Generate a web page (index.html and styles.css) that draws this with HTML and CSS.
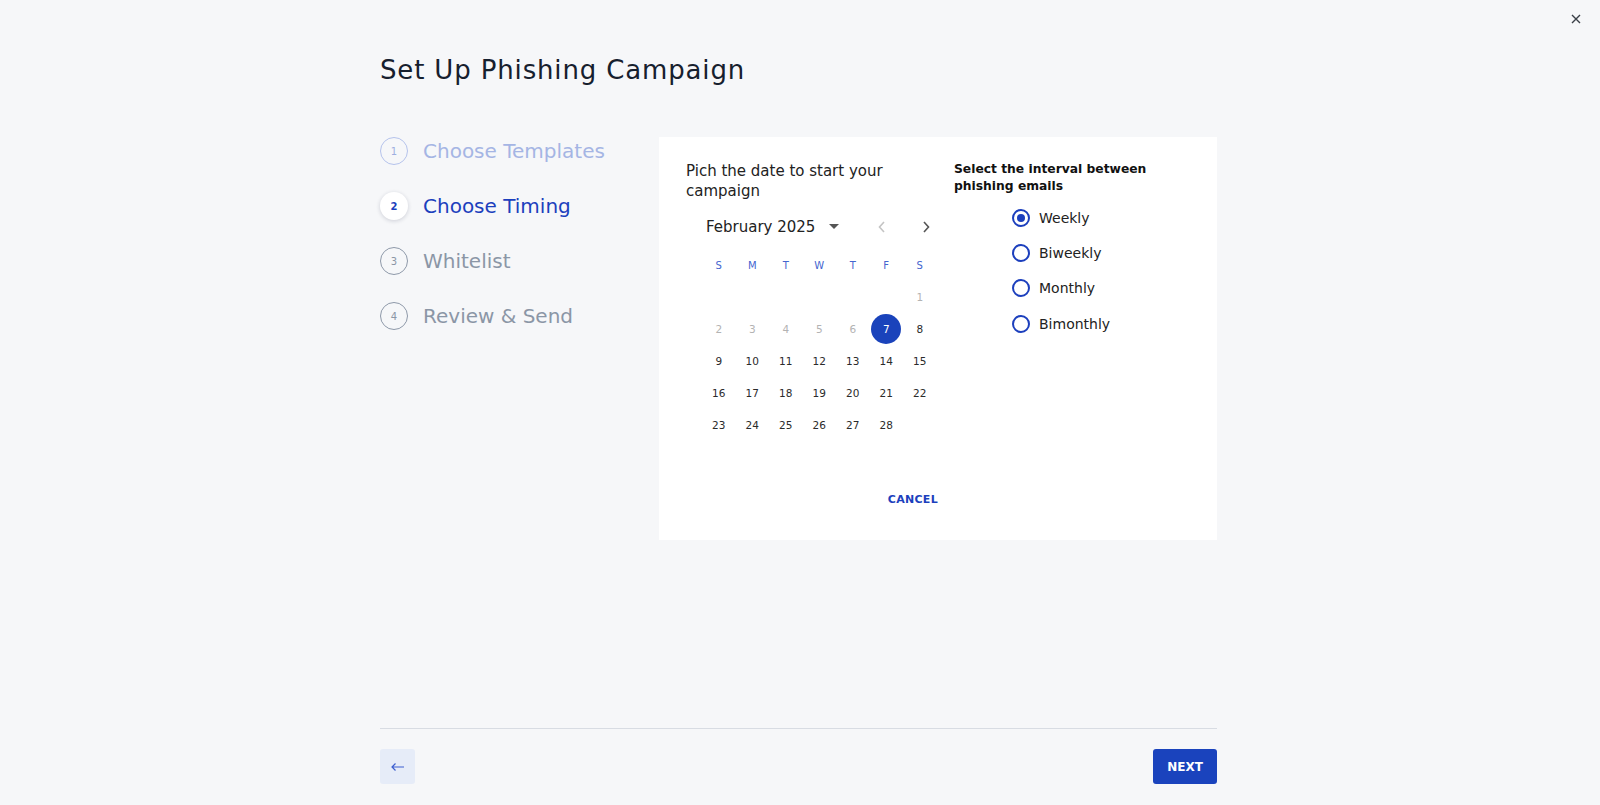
FILE: index.html
```html
<!DOCTYPE html>
<html>
<head>
<meta charset="utf-8">
<link rel="stylesheet" href="styles.css">
</head>
<body>
<button class="close" aria-label="Close">
  <svg width="10" height="10" viewBox="0 0 10 10"><path d="M1 1L9 9M9 1L1 9" stroke="#3a3f47" stroke-width="1.4" fill="none"/></svg>
</button>
<div class="page">
  <h1 class="title">Set Up Phishing Campaign</h1>
  <div class="main">
    <ul class="steps">
      <li class="step done"><span class="num">1</span><span class="label">Choose Templates</span></li>
      <li class="step active"><span class="num">2</span><span class="label">Choose Timing</span></li>
      <li class="step"><span class="num">3</span><span class="label">Whitelist</span></li>
      <li class="step"><span class="num">4</span><span class="label">Review &amp; Send</span></li>
    </ul>
    <div class="card">
      <div class="cal-col">
        <p class="prompt">Pich the date to start your campaign</p>
        <div class="cal-head">
          <span class="month">February 2025</span>
          <svg class="caret" width="10" height="6" viewBox="0 0 10 6"><path d="M0 0H10L5 5Z" fill="#555"/></svg>
          <span class="navs">
            <svg class="nav" width="16" height="16" viewBox="0 0 16 16"><path d="M10 3L5.5 8L10 13" stroke="#c4c4c4" stroke-width="1.6" fill="none"/></svg>
            <svg class="nav" width="16" height="16" viewBox="0 0 16 16"><path d="M6 3L10.5 8L6 13" stroke="#555" stroke-width="1.6" fill="none"/></svg>
          </span>
        </div>
        <div class="grid wk">
          <span>S</span><span>M</span><span>T</span><span>W</span><span>T</span><span>F</span><span>S</span>
        </div>
        <div class="grid days">
          <span></span><span></span><span></span><span></span><span></span><span></span><span class="off">1</span>
          <span class="off">2</span><span class="off">3</span><span class="off">4</span><span class="off">5</span><span class="off">6</span><span class="sel">7</span><span>8</span>
          <span>9</span><span>10</span><span>11</span><span>12</span><span>13</span><span>14</span><span>15</span>
          <span>16</span><span>17</span><span>18</span><span>19</span><span>20</span><span>21</span><span>22</span>
          <span>23</span><span>24</span><span>25</span><span>26</span><span>27</span><span>28</span><span></span>
        </div>
        <div class="actions"><button class="cancel">CANCEL</button></div>
      </div>
      <div class="int-col">
        <p class="int-title">Select the interval between phishing emails</p>
        <div class="radios">
          <label class="radio checked"><span class="dot"></span>Weekly</label>
          <label class="radio"><span class="dot"></span>Biweekly</label>
          <label class="radio"><span class="dot"></span>Monthly</label>
          <label class="radio"><span class="dot"></span>Bimonthly</label>
        </div>
      </div>
    </div>
  </div>
  <div class="footer">
    <button class="back" aria-label="Back">
      <svg width="14" height="10" viewBox="0 0 14 10"><path d="M4.5 1.5L1 5L4.5 8.5M1 5H13" stroke="#3d5fd0" stroke-width="1.2" fill="none"/></svg>
    </button>
    <button class="next">NEXT</button>
  </div>
</div>
</body>
</html>
```

FILE: styles.css
```css
* { box-sizing: border-box; }
html, body { margin: 0; padding: 0; }
body {
  background: #f6f7f9;
  font-family: "DejaVu Sans", "Noto Sans", sans-serif;
  color: #222;
  height: 805px;
  position: relative;
  overflow: hidden;
}
button { font-family: inherit; border: 0; cursor: pointer; }
.close {
  position: absolute;
  top: 12px;
  right: 17px;
  width: 14px;
  height: 14px;
  padding: 2px;
  background: transparent;
  display: flex;
  align-items: center;
  justify-content: center;
}
.page {
  width: 837px;
  margin: 0 0 0 380px;
  height: 805px;
  display: flex;
  flex-direction: column;
}
.title {
  margin: 52px 0 0 0;
  font-size: 26px;
  font-weight: 400;
  line-height: 36px;
  color: #16202e;
  letter-spacing: 0.85px;
}
.main {
  display: flex;
  margin-top: 49px;
}
.steps {
  list-style: none;
  margin: 0;
  padding: 0;
  width: 279px;
  display: flex;
  flex-direction: column;
  gap: 27px;
}
.step {
  display: flex;
  align-items: center;
  height: 28px;
  color: #8b96a6;
}
.num {
  width: 28px;
  height: 28px;
  border-radius: 50%;
  border: 1.5px solid #8e99a9;
  display: flex;
  align-items: center;
  justify-content: center;
  font-size: 10px;
  margin-right: 15px;
}
.label { font-size: 20px; }
.step.done { color: #a5b5e4; }
.step.done .num { border-color: #b5c3ec; color: #9eaee0; }
.step.active { color: #1c3fbd; }
.step.active .num {
  border: 0;
  background: #fff;
  color: #1c3fbd;
  font-weight: 700;
  box-shadow: 0 1px 4px rgba(20, 30, 60, 0.18);
}
.card {
  width: 558px;
  height: 403px;
  background: #fff;
  display: flex;
  padding: 24px 0 0 27px;
}
.cal-col {
  width: 254px;
  display: flex;
  flex-direction: column;
}
.prompt {
  margin: 0;
  font-size: 15px;
  line-height: 20px;
  color: #222;
  width: 220px;
}
.cal-head {
  display: flex;
  align-items: center;
  height: 32px;
  margin-top: 10px;
  padding-left: 20px;
}
.month { font-size: 15px; color: #222; }
.caret { margin-left: 14px; }
.navs {
  margin-left: auto;
  display: flex;
  gap: 28px;
  margin-right: 6px;
}
.grid {
  display: grid;
  grid-template-columns: repeat(7, 33.5px);
  margin-left: 16px;
}
.grid span {
  height: 32px;
  display: flex;
  align-items: center;
  justify-content: center;
}
.wk { margin-top: 6px; }
.wk span { font-size: 10px; color: #4465cf; }
.days span { font-size: 10.5px; color: #2b2b2b; }
.days span.off { color: #b3b3b3; }
.days span.sel {
  color: #fff;
  background: #1a43bb;
  border-radius: 50%;
  width: 30px;
  height: 30px;
  margin: 1px auto;
}
.actions {
  display: flex;
  justify-content: flex-end;
  margin-top: 42px;
}
.cancel {
  background: transparent;
  color: #1c3fbd;
  font-size: 11px;
  font-weight: 700;
  letter-spacing: 0.3px;
  padding: 10px 2px 10px 4px;
}
.int-col {
  padding-left: 14px;
  padding-top: 0;
}
.int-title {
  margin: 0;
  font-size: 12.3px;
  line-height: 17px;
  font-weight: 700;
  color: #111;
  width: 210px;
}
.radios {
  display: flex;
  flex-direction: column;
  margin-top: 5px;
  padding-left: 58px;
}
.radio {
  display: flex;
  align-items: center;
  height: 35.3px;
  font-size: 14px;
  color: #222;
}
.dot {
  width: 18px;
  height: 18px;
  border-radius: 50%;
  border: 2px solid #1c3fbd;
  margin-right: 9px;
  display: flex;
  align-items: center;
  justify-content: center;
}
.radio.checked .dot::after {
  content: "";
  width: 8px;
  height: 8px;
  border-radius: 50%;
  background: #1c3fbd;
}
.footer {
  margin-top: auto;
  margin-bottom: 21px;
  border-top: 1px solid #d8dce3;
  padding-top: 20px;
  display: flex;
  justify-content: space-between;
}
.back {
  width: 35px;
  height: 35px;
  border-radius: 3px;
  background: #e6ecf8;
  display: flex;
  align-items: center;
  justify-content: center;
}
.next {
  width: 64px;
  height: 35px;
  border-radius: 3px;
  background: #1a43bd;
  color: #fff;
  font-size: 12px;
  font-weight: 700;
}
```
